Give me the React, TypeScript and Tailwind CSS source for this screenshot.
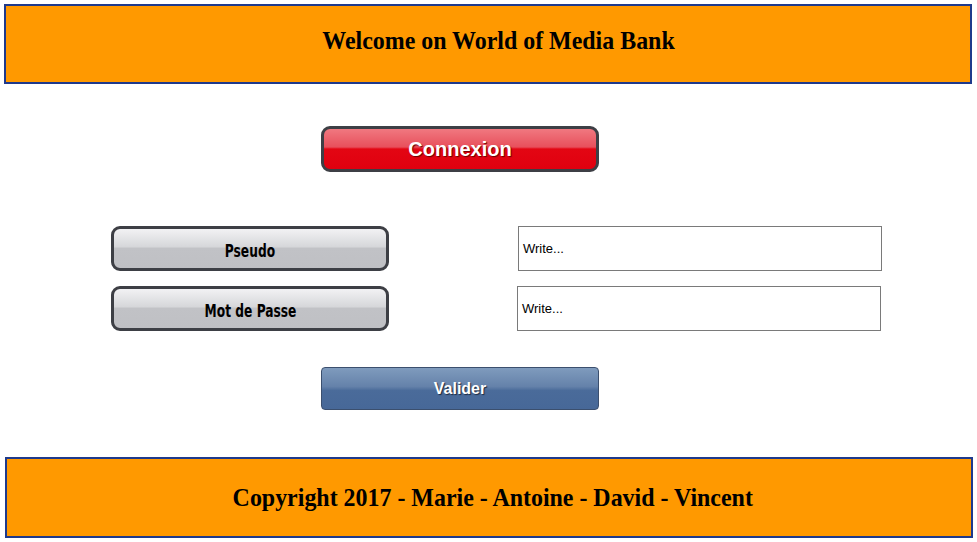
export default function App() {
  return (
    <div className="w-[977px] h-[542px] bg-white overflow-hidden relative">
      {/* Header */}
      <header className="ml-[4px] mt-[4px] w-[968px] h-[80px] bg-[#ff9900] border-2 border-[#1f3a8c] flex items-center justify-center">
        <h1 className="font-['Liberation_Serif',serif] font-bold text-[26px] text-black scale-x-[0.92] translate-x-[11px] -mt-[8px]">
          Welcome on World of Media Bank
        </h1>
      </header>

      {/* Connexion */}
      <div className="flex pl-[321px] mt-[42px]">
        <button className="w-[278px] h-[46px] rounded-[9px] border-[3px] border-[#3d3f45] bg-[linear-gradient(#f07880_0%,#e8505c_45%,#e30613_50%,#e0000f_100%)] text-white font-['Liberation_Sans',sans-serif] font-bold text-[20px] [text-shadow:1px_1px_1px_#6b0000]">
          Connexion
        </button>
      </div>

      {/* Form rows */}
      <div className="flex flex-col mt-[54px]">
        <div className="flex items-start">
          <button className="ml-[111px] w-[278px] h-[45px] rounded-[9px] border-[3px] border-[#3d3f45] bg-[linear-gradient(#f2f2f4_0%,#d6d7da_45%,#c1c2c6_50%,#bfc0c4_100%)] text-black font-['DejaVu_Sans',sans-serif] font-bold text-[18px] flex items-center justify-center">
            <span className="inline-block scale-x-[0.68] mt-[4px]">Pseudo</span>
          </button>
          <div className="ml-[129px] w-[364px] h-[45px] border border-[#7a7a7a] flex items-center pl-[4px]">
            <span className="font-['Liberation_Sans',sans-serif] text-[13px] text-black">Write...</span>
          </div>
        </div>
        <div className="flex items-start mt-[15px]">
          <button className="ml-[111px] w-[278px] h-[45px] rounded-[9px] border-[3px] border-[#3d3f45] bg-[linear-gradient(#f2f2f4_0%,#d6d7da_45%,#c1c2c6_50%,#bfc0c4_100%)] text-black font-['DejaVu_Sans',sans-serif] font-bold text-[18px] flex items-center justify-center">
            <span className="inline-block scale-x-[0.68] mt-[4px]">Mot de Passe</span>
          </button>
          <div className="ml-[128px] w-[364px] h-[45px] border border-[#7a7a7a] flex items-center pl-[4px]">
            <span className="font-['Liberation_Sans',sans-serif] text-[13px] text-black">Write...</span>
          </div>
        </div>
      </div>

      {/* Valider */}
      <div className="flex pl-[321px] mt-[36px]">
        <button className="w-[278px] h-[43px] rounded-[4px] border border-[#3b4f6e] bg-[linear-gradient(#7f9bbd_0%,#6582aa_45%,#4a6b9a_55%,#476898_100%)] text-white font-['Liberation_Sans',sans-serif] font-bold text-[16px] [text-shadow:1px_1px_1px_#1c2a40]">
          Valider
        </button>
      </div>

      {/* Footer */}
      <footer className="ml-[5px] mt-[47px] w-[968px] h-[81px] bg-[#ff9900] border-2 border-[#1f3a8c] flex items-center justify-center">
        <p className="font-['Liberation_Serif',serif] font-bold text-[26px] text-black scale-x-[0.92] translate-x-[4px] -mt-[1px]">
          Copyright 2017 - Marie - Antoine - David - Vincent
        </p>
      </footer>
    </div>
  );
}
